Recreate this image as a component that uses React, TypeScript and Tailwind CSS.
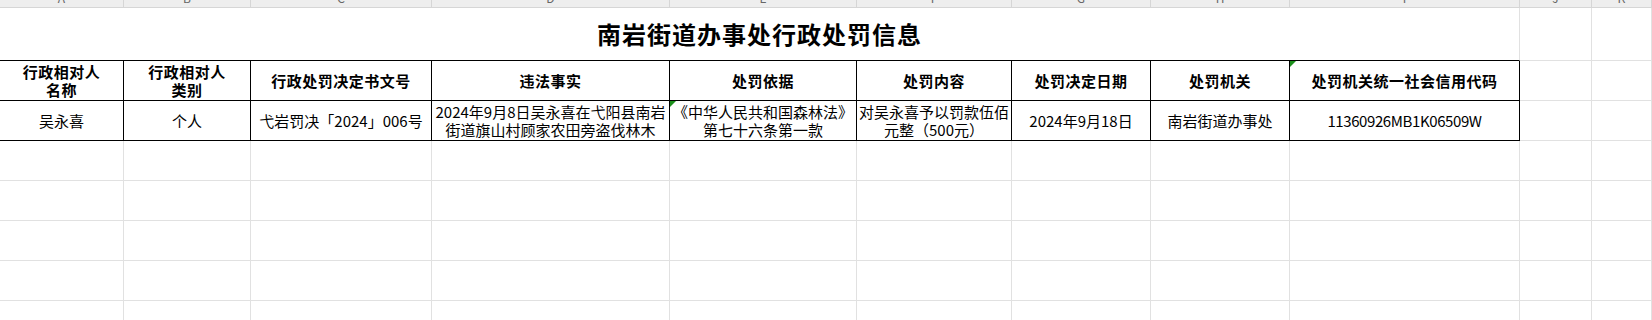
import React from "react";

const font = { fontFamily: '"Noto Sans CJK SC", "Noto Sans", sans-serif' };

const letters = ["A", "B", "C", "D", "E", "F", "G", "H", "I", "J", "K"];

function Tri() {
  return (
    <div className="absolute left-0 top-0 w-0 h-0 border-t-[6px] border-t-[#1b8f1b] border-r-[6px] border-r-transparent" />
  );
}

export default function App() {
  const hdr =
    "relative flex items-center justify-center text-center border-r border-b border-black text-[15px] leading-[18px] font-bold tracking-[0.5px] text-black whitespace-nowrap";
  const dat =
    "relative flex items-center justify-center text-center border-r border-b border-black text-[15px] leading-[18px] text-black whitespace-nowrap";
  const gray = "border-r border-b border-[#e1e1e1]";
  const headers: React.ReactNode[] = [
    <>行政相对人<br />名称</>,
    <>行政相对人<br />类别</>,
    <>行政处罚决定书文号</>,
    <>违法事实</>,
    <>处罚依据</>,
    <>处罚内容</>,
    <>处罚决定日期</>,
    <>处罚机关</>,
    <>处罚机关统一社会信用代码</>,
  ];
  const data: React.ReactNode[] = [
    <>吴永喜</>,
    <>个人</>,
    <>弋岩罚决「2024」006号</>,
    <>2024年9月8日吴永喜在弋阳县南岩<br />街道旗山村顾家农田旁盗伐林木</>,
    <>《中华人民共和国森林法》<br />第七十六条第一款</>,
    <>对吴永喜予以罚款伍佰<br />元整（500元）</>,
    <>2024年9月18日</>,
    <>南岩街道办事处</>,
    <span className="tracking-[-0.4px]">11360926MB1K06509W</span>,
  ];
  return (
    <div className="w-[1652px] h-[320px] overflow-hidden bg-white" style={font}>
      <div className="grid grid-cols-[124px_127px_181px_238px_187px_155px_139px_139px_230px_72px_1fr] grid-rows-[8px_53px_40px_40px_40px_40px_40px_40px_40px]">
        {letters.map((l) => (
          <div
            key={l}
            className="h-[8px] bg-[#eeeeee] border-r border-b border-[#d6d6d6] overflow-hidden flex justify-center"
          >
            <span className="text-[12px] leading-[12px] text-[#666] -mt-[8px]">{l}</span>
          </div>
        ))}

        <div className="col-span-9 flex items-center justify-center border-r border-[#e1e1e1] border-b border-b-black">
          <span className="text-[24px] font-bold tracking-[1px] text-black leading-none">
            南岩街道办事处行政处罚信息
          </span>
        </div>
        <div className={gray} />
        <div className={gray} />

        {headers.map((h, i) => (
          <div key={"h" + i} className={hdr}>
            {i === 8 && <Tri />}
            <div>{h}</div>
          </div>
        ))}
        <div className={gray} />
        <div className={gray} />

        {data.map((d, i) => (
          <div key={"d" + i} className={dat}>
            {i === 4 && <Tri />}
            <div>{d}</div>
          </div>
        ))}
        <div className={gray} />
        <div className={gray} />

        {Array.from({ length: 5 * 11 }).map((_, i) => (
          <div key={"e" + i} className={gray} />
        ))}
      </div>
    </div>
  );
}
